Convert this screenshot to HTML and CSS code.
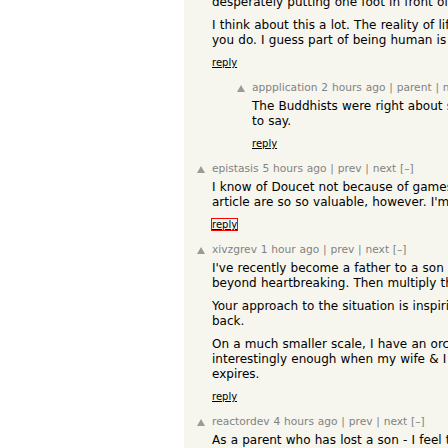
FILE: index.html
```html
<!DOCTYPE html>
<html lang="en">
<head>
<meta charset="utf-8">
<title>Hacker News comments</title>
<link rel="stylesheet" href="styles.css">
</head>
<body>
<div class="page">
  <div class="thread">

    <div class="comtr lvl0">
      <div class="ind"></div>
      <div class="votelinks"></div>
      <div class="default">
        <div class="commtext">
          <p>desperately putting one foot in front of the other.</p>
          <p>I think about this a lot. The reality of life is that it goes on, no matter what<br>you do. I guess part of being human is learning to carry it with you.</p>
        </div>
        <div class="reply"><a href="#">reply</a></div>
      </div>
    </div>

    <div class="comtr lvl1">
      <div class="ind"></div>
      <div class="votelinks"><svg class="votearrow" viewBox="0 0 8 7"><polygon points="4,0 8,7 0,7"/></svg></div>
      <div class="default">
        <div class="comhead"><a class="hnuser" href="#">appplication</a> <a href="#">2 hours ago</a> | <a href="#">parent</a> | <a href="#">next</a> [–]</div>
        <div class="commtext">
          <p>The Buddhists were right about suffering. There's not much more anyone can add, and nothing else<br>to say.</p>
        </div>
        <div class="reply"><a href="#">reply</a></div>
      </div>
    </div>

    <div class="comtr lvl0">
      <div class="ind"></div>
      <div class="votelinks"><svg class="votearrow" viewBox="0 0 8 7"><polygon points="4,0 8,7 0,7"/></svg></div>
      <div class="default">
        <div class="comhead"><a class="hnuser" href="#">epistasis</a> <a href="#">5 hours ago</a> | <a href="#">prev</a> | <a href="#">next</a> [–]</div>
        <div class="commtext">
          <p>I know of Doucet not because of games but because of his writing, and posts like this<br>article are so so valuable, however. I'm so sorry for his loss.</p>
        </div>
        <div class="reply"><a class="focused" href="#">reply</a></div>
      </div>
    </div>

    <div class="comtr lvl0">
      <div class="ind"></div>
      <div class="votelinks"><svg class="votearrow" viewBox="0 0 8 7"><polygon points="4,0 8,7 0,7"/></svg></div>
      <div class="default">
        <div class="comhead"><a class="hnuser" href="#">xivzgrev</a> <a href="#">1 hour ago</a> | <a href="#">prev</a> | <a href="#">next</a> [–]</div>
        <div class="commtext">
          <p>I've recently become a father to a son and I can't imagine what that would be like. It's<br>beyond heartbreaking. Then multiply that by the years of waiting.</p>
          <p>Your approach to the situation is inspiring. Thank you for sharing and I hope you find your way<br>back.</p>
          <p>On a much smaller scale, I have an orchid that was given to us at our wedding, and<br>interestingly enough when my wife &amp; I go through hard times it nearly dies, but it never<br>expires.</p>
        </div>
        <div class="reply"><a href="#">reply</a></div>
      </div>
    </div>

    <div class="comtr lvl0">
      <div class="ind"></div>
      <div class="votelinks"><svg class="votearrow" viewBox="0 0 8 7"><polygon points="4,0 8,7 0,7"/></svg></div>
      <div class="default">
        <div class="comhead"><a class="hnuser" href="#">reactordev</a> <a href="#">4 hours ago</a> | <a href="#">prev</a> | <a href="#">next</a> [–]</div>
        <div class="commtext">
          <p>As a parent who has lost a son - I feel this so deeply, and I am so sorry.</p>
        </div>
        <div class="reply"><a href="#">reply</a></div>
      </div>
    </div>

  </div>
</div>
</body>
</html>
```

FILE: styles.css
```css
html, body {
  margin: 0;
  padding: 0;
}

body {
  background: #ffffff;
  font-family: "DejaVu Sans", Verdana, sans-serif;
  overflow: hidden;
}

.page {
  margin-left: 184px;
  width: 720px;
  height: 448px;
  background: #f6f6ef;
  overflow: hidden;
}

.thread {
  margin-top: -5px;
}

.comtr {
  display: flex;
  padding-bottom: 12px;
}

.ind {
  flex: none;
  width: 0;
}

.lvl1 .ind {
  width: 40px;
}

.votelinks {
  flex: none;
  width: 28px;
  box-sizing: border-box;
  padding: 4px 0 0 13px;
}

.votearrow {
  display: block;
  width: 8px;
  height: 7px;
  fill: #9a9a9a;
}

.default {
  flex: 1;
  min-width: 0;
}

.comhead {
  font-size: 8pt;
  line-height: 13px;
  color: #828282;
  margin-bottom: 5px;
  white-space: nowrap;
  word-spacing: 0.4px;
}

.comhead a {
  color: #828282;
  text-decoration: none;
}

.commtext {
  font-size: 12px;
  line-height: 15px;
  color: #000000;
  white-space: nowrap;
  word-spacing: 0.4px;
}

.commtext p {
  margin: 8px 0 0;
}

.commtext p:first-child {
  margin-top: 0;
}

.reply {
  margin-top: 9px;
  font-size: 10px;
  line-height: 12px;
}

.reply a {
  color: #000000;
  text-decoration: underline;
}

.reply a.focused {
  outline: 1px solid #ff0000;
}
```
